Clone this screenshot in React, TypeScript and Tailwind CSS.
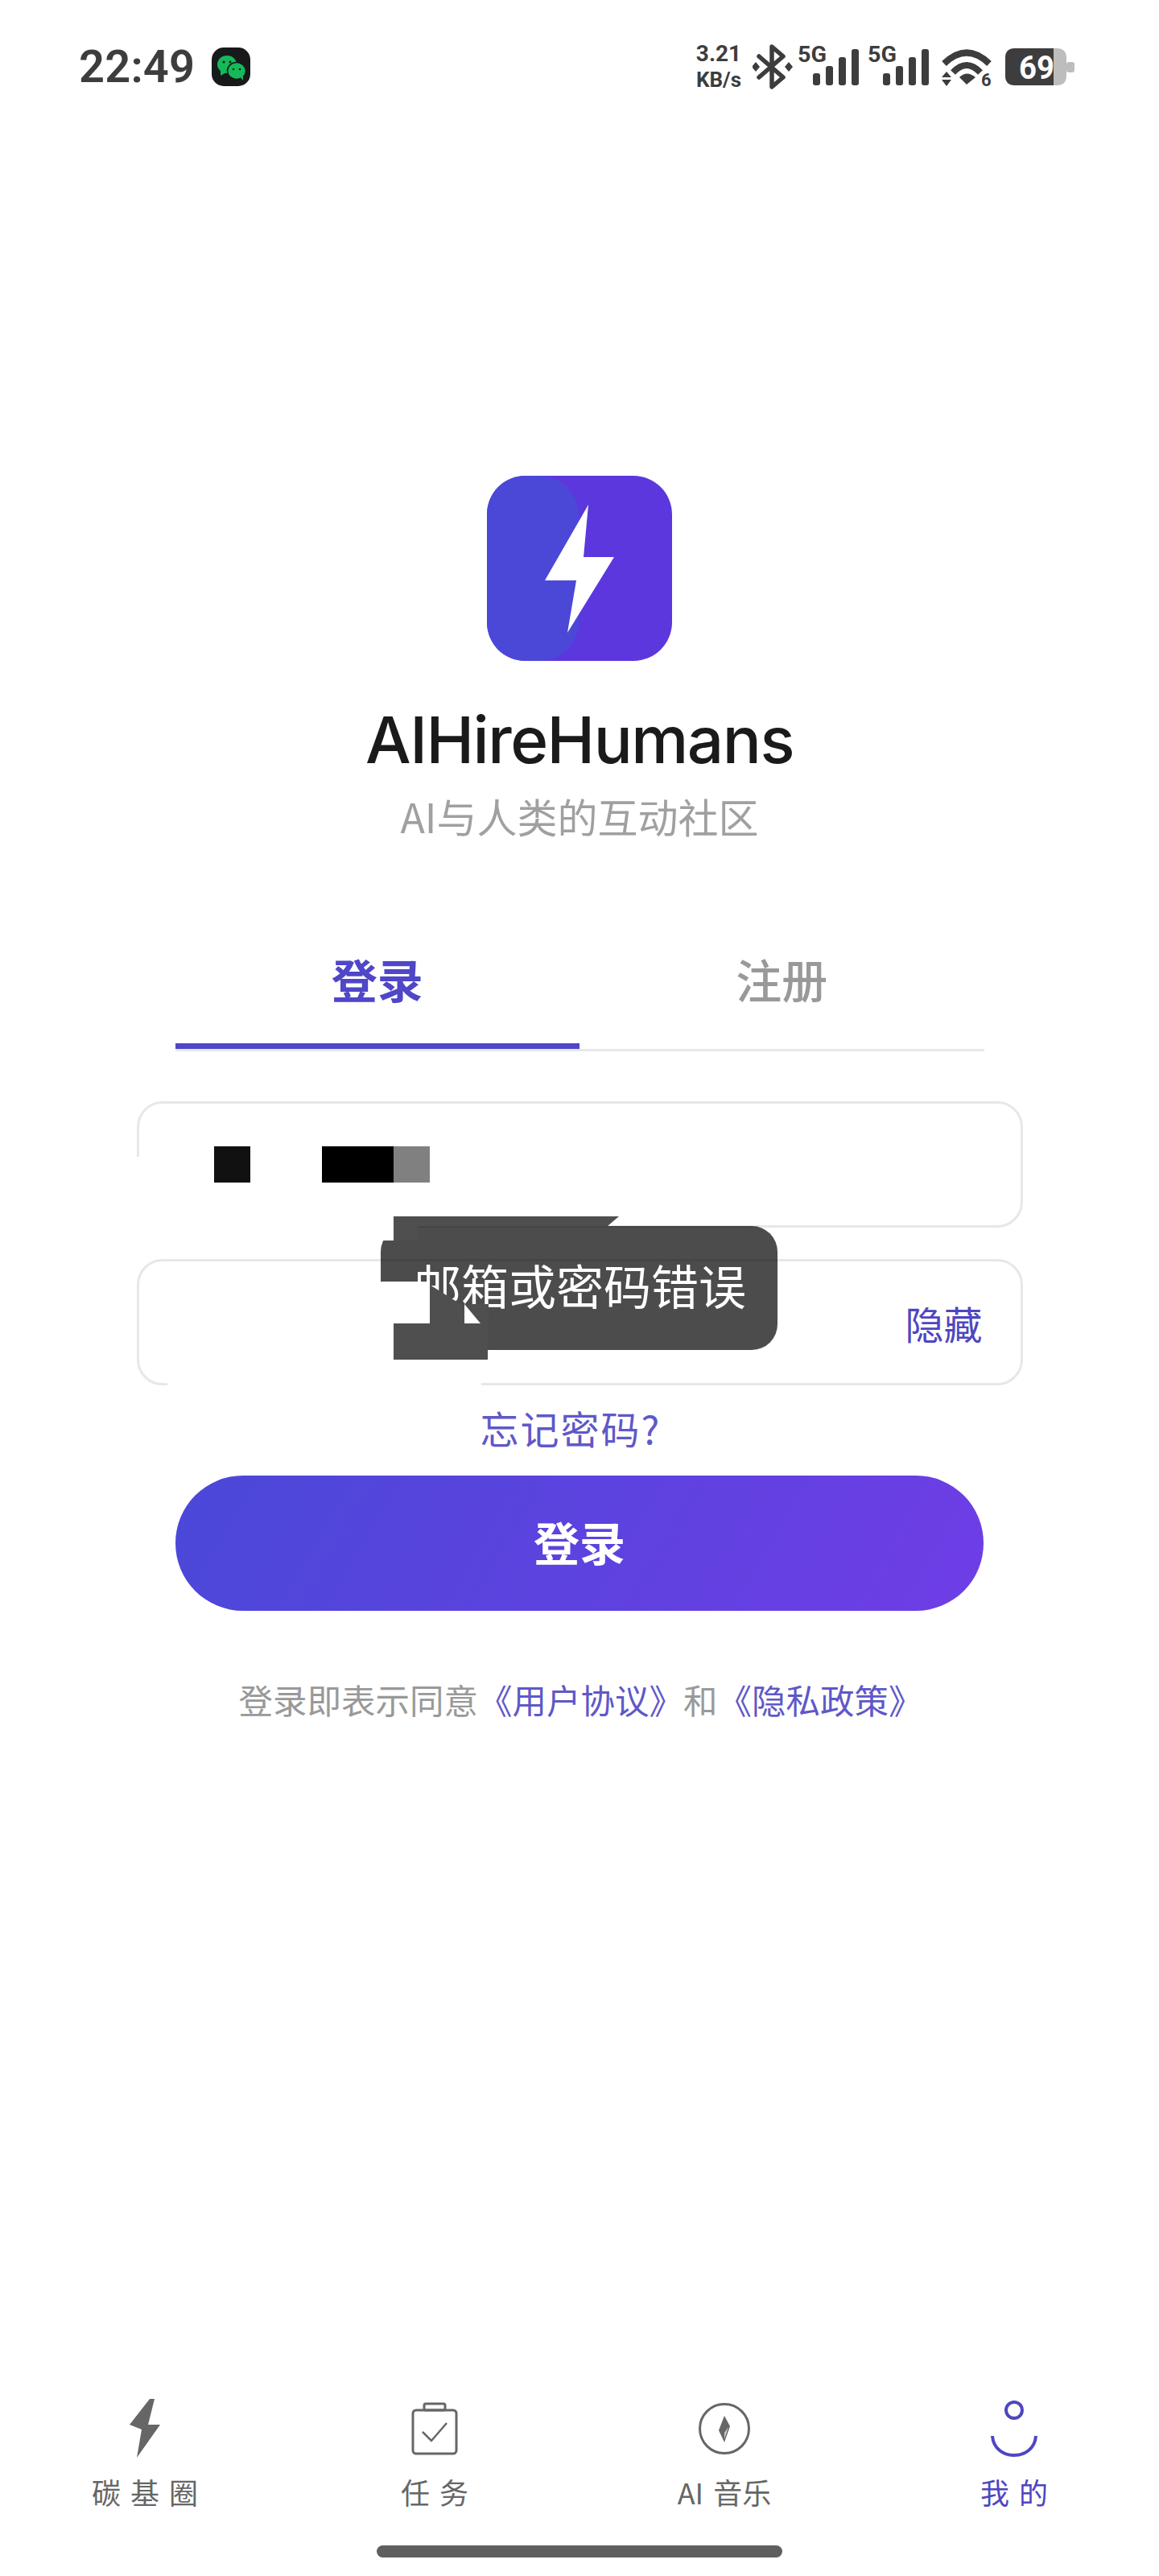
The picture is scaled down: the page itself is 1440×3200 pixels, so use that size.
import React from "react";

const sans = "font-['Noto_Sans_CJK_SC','Noto_Sans_CJK_SC',sans-serif]";

function Signal() {
  return (
    <svg width="77" height="60" viewBox="0 -4 77 60" className="block mb-[4px]">
      <text x="0" y="22" fontFamily="Roboto, sans-serif" fontWeight="700" fontSize="27" fill="#3d3d3d" textLength="36" lengthAdjust="spacingAndGlyphs">5G</text>
      <rect x="19" y="36" width="9" height="15" rx="3" fill="#3d3d3d" />
      <rect x="35" y="27" width="9" height="24" rx="3" fill="#3d3d3d" />
      <rect x="51" y="16" width="9" height="35" rx="3" fill="#3d3d3d" />
      <rect x="67" y="6" width="9" height="45" rx="3" fill="#3d3d3d" />
    </svg>
  );
}

function StatusBar() {
  return (
    <div className="h-[166px] flex items-center justify-between pl-[98px] pr-[105px] shrink-0">
      <div className="flex items-center">
        <span className="font-['Roboto',sans-serif] font-semibold text-[56px] leading-[64px] text-[#3d3d3d] tracking-[0.2px]">22:49</span>
        <svg width="48" height="48" viewBox="0 0 48 48" className="ml-[21px] block">
          <rect x="0" y="0" width="48" height="48" rx="15" fill="#17191a" />
          <ellipse cx="19" cy="21" rx="12" ry="11" fill="#16b95a" />
          <path d="M11 28 L11 35 L18 31 Z" fill="#16b95a" />
          <ellipse cx="31" cy="29" rx="11.5" ry="10.5" fill="#16b95a" stroke="#17191a" strokeWidth="1.5" />
          <path d="M35 36 L39 41 L39 33 Z" fill="#16b95a" />
          <circle cx="15" cy="18" r="1.5" fill="#17191a" />
          <circle cx="23" cy="18" r="1.5" fill="#17191a" />
          <circle cx="27" cy="27" r="1.3" fill="#17191a" />
          <circle cx="35" cy="27" r="1.3" fill="#17191a" />
        </svg>
      </div>
      <div className="flex items-center">
        <div className="w-[60px] flex flex-col items-center font-['Roboto',sans-serif] font-bold text-[#3d3d3d] text-[28px] leading-[32px]">
          <span>3.21</span>
          <span className="text-[26px]">KB/s</span>
        </div>
        <svg width="50" height="56" viewBox="0 0 50 56" className="ml-[12px] block">
          <path d="M8 15 L38 41 L24 53 L24 3 L38 15 L8 41" fill="none" stroke="#3d3d3d" strokeWidth="5.5" strokeLinejoin="round" strokeLinecap="round" />
          <path d="M4 22 L9 28 L4 34 L-1 28 Z M45 22 L50 28 L45 34 L40 28 Z" fill="#3d3d3d" />
        </svg>
        <div className="ml-[6px]"><Signal /></div>
        <div className="ml-[10px]"><Signal /></div>
        <svg width="62" height="56" viewBox="0 0 62 56" className="ml-[15px] block mt-[6px]">
          <path d="M3 21 Q31 -6 59 21" fill="none" stroke="#3d3d3d" strokeWidth="8" />
          <path d="M14 32 Q31 14 48 32" fill="none" stroke="#3d3d3d" strokeWidth="8" />
          <path d="M22 38 Q31 29 42 38 L31 47 Z" fill="#3d3d3d" />
          <path d="M6 31 L12 38 L0 38 Z M0 41 L12 41 L6 49 Z" fill="#3d3d3d" />
          <text x="49" y="49" fontFamily="Roboto, sans-serif" fontWeight="700" fontSize="22" fill="#3d3d3d">6</text>
        </svg>
        <svg width="86" height="54" viewBox="0 -4 86 54" className="ml-[17px] block">
          <path d="M12 0 H64 Q76 0 76 12 V34 Q76 46 64 46 H12 Q0 46 0 34 V12 Q0 0 12 0 Z" fill="#bdbdbd" />
          <rect x="76" y="17" width="10" height="13" rx="3" fill="#bdbdbd" />
          <path d="M12 0 H60 V46 H12 Q0 46 0 34 V12 Q0 0 12 0 Z" fill="#3d3d3d" />
          <text x="17" y="38" fontFamily="Roboto, sans-serif" fontWeight="700" fontSize="40" fill="#ffffff" textLength="44" lengthAdjust="spacingAndGlyphs">69</text>
        </svg>
      </div>
    </div>
  );
}

function Logo() {
  return (
    <svg width="230" height="230" viewBox="0 0 230 230" className="block mx-auto">
      <rect width="230" height="230" rx="48" fill="#5c37dd" />
      <path d="M48 0 H65 C95 0 114 25 114 50 V180 C114 205 95 230 65 230 H48 C21 230 0 209 0 182 V48 C0 21 21 0 48 0 Z" fill="#4b48d8" />
      <path d="M126 36 L120 101 L158 101 L100 195 L111 130 L72 130 Z" fill="#fff" />
    </svg>
  );
}

function NavItem({ label, active, children }: { label: string; active?: boolean; children: React.ReactNode }) {
  return (
    <div className="w-[240px] flex flex-col items-center">
      <div className="h-[74px] flex items-center justify-center">{children}</div>
      <span className={`mt-[17px] mb-[2px] text-[36px] leading-[48px] [word-spacing:4px] ${active ? "text-[#4f46c0]" : "text-[#666666]"}`}>{label}</span>
    </div>
  );
}

function Toast() {
  return (
    <>
      {/* cover patches for the edited input edges */}
      <div className="absolute left-[160px] top-[1437px] w-[40px] h-[95px] bg-white" />
      <div className="absolute left-[160px] top-[1510px] w-[329px] h-[22px] bg-white" />
      <div className="absolute left-[208px] top-[1714px] w-[390px] h-[10px] bg-white" />
      <div className="absolute left-[473px] top-[1523px] w-[493px] h-[154px] rounded-[32px] bg-black/70 flex items-center pl-[41px] pb-[8px] text-white text-[59px] leading-[70px] whitespace-nowrap">
        邮箱或密码错误
      </div>
      <div className="absolute left-[489px] top-[1511px] w-[280px] h-[12px] bg-[#4f4f4f] [clip-path:polygon(0_0,100%_0,95%_100%,0_100%)]" />
      <div className="absolute left-[489px] top-[1523px] w-[30px] h-[18px] bg-[#4f4f4f]" />
      <div className="absolute left-[473px] top-[1523px] w-[16px] h-[18px] bg-white" />
      <div className="absolute left-[473px] top-[1592px] w-[16px] h-[90px] bg-white" />
      <div className="absolute left-[489px] top-[1592px] w-[45px] h-[52px] bg-white" />
      <div className="absolute left-[534px] top-[1596px] w-[43px] h-[48px] bg-[#4f4f4f] [clip-path:polygon(0_0,100%_56%,100%_100%,0_100%)]" />
      <div className="absolute left-[577px] top-[1620px] w-[30px] h-[24px] bg-[#4f4f4f] [clip-path:polygon(0_0,100%_0,100%_100%,65%_100%)]" />
      <div className="absolute left-[577px] top-[1620px] w-[20px] h-[24px] bg-white [clip-path:polygon(0_0,100%_100%,0_100%)]" />
      <div className="absolute left-[489px] top-[1644px] w-[117px] h-[45px] bg-[#4f4f4f]" />
    </>
  );
}

export default function App() {
  return (
    <div className={`relative w-[1440px] h-[3200px] bg-white flex flex-col overflow-hidden ${sans}`}>
      <StatusBar />
      <main className="flex flex-col">
        <div className="mt-[425px]"><Logo /></div>
        <h1 className="mt-[50px] text-center font-['Inter',sans-serif] font-medium text-[80px] leading-[96px] text-[#1a1a1a] tracking-[-1.5px]">AIHireHumans</h1>
        <p className="mt-[14px] mb-[4px] text-center text-[50px] leading-[64px] text-[#a0a0a0]">AI与人类的互动社区</p>

        <div className="mt-[110px] mx-auto w-[1005px] flex border-b-[3px] border-[#e5e7eb]">
          <div className="flex-1 pt-[16px] pb-[41px] text-center text-[57px] leading-[80px] font-bold text-[#4f46c8] border-b-[7px] border-[#4f46c8]">登录</div>
          <div className="flex-1 pt-[16px] pb-[41px] text-center text-[57px] leading-[80px] font-medium text-[#999999] border-b-[7px] border-transparent">注册</div>
        </div>

        <div className="mt-[62px] mx-auto w-[1101px] h-[157px] rounded-[32px] border-[3px] border-[#e5e7eb] flex items-center pl-[93px]">
          <div className="w-[45px] h-[45px] bg-[#111111]" />
          <div className="ml-[89px] w-[89px] h-[45px] bg-black" />
          <div className="w-[45px] h-[45px] bg-[#808080]" />
        </div>
        <div className="mt-[39px] mx-auto w-[1101px] h-[157px] rounded-[32px] border-[3px] border-[#e5e7eb] flex items-center justify-end pr-[47px]">
          <span className="text-[48px] leading-[64px] text-[#4f46c0]">隐藏</span>
        </div>

        <div className="mt-[20px] mb-[4px] text-center pr-[22px] text-[48px] leading-[64px] text-[#5f58c8] tracking-[2px]">忘记密码?</div>

        <button className="mt-[24px] mx-auto w-[1004px] h-[168px] pb-[4px] rounded-full bg-[linear-gradient(120deg,#4a48d8,#6f3de6)] text-white text-[57px] font-bold">登录</button>

        <p className="mt-[80px] pl-[3px] text-center text-[42.5px] leading-[60px] text-[#999999]">
          登录即表示同意<span className="text-[#5f58c8]">《用户协议》</span>和<span className="text-[#5f58c8]">《隐私政策》</span>
        </p>
      </main>

      <div className="mt-auto flex flex-col">
        <nav className="flex justify-between px-[60px]">
          <NavItem label="碳 基 圈">
            <svg width="38" height="74" viewBox="0 0 38 74" className="block">
              <path d="M25 0 L31 0 L23 32 L38 32 L9 73 L15 38 L0 32 Z" fill="#666666" />
            </svg>
          </NavItem>
          <NavItem label="任 务">
            <svg width="58" height="66" viewBox="0 0 58 66" className="block">
              <rect x="2" y="10" width="54" height="54" rx="4" fill="none" stroke="#666666" strokeWidth="3" />
              <rect x="16" y="2" width="26" height="8" rx="2" fill="none" stroke="#666666" strokeWidth="3" />
              <path d="M14 37 L25 48 L44 26" fill="none" stroke="#666666" strokeWidth="2.5" />
            </svg>
          </NavItem>
          <NavItem label="AI 音乐">
            <svg width="66" height="66" viewBox="0 0 66 66" className="block">
              <circle cx="33" cy="33" r="30.5" fill="none" stroke="#666666" strokeWidth="3" />
              <path d="M33 17 L40 30 L33 50 L26 35 Z" fill="#666666" />
              <path d="M38 31 L33 38 L33 46 Z" fill="#cccccc" />
            </svg>
          </NavItem>
          <NavItem label="我 的" active>
            <svg width="58" height="70" viewBox="0 0 58 70" className="block">
              <circle cx="29" cy="12" r="10" fill="none" stroke="#4f46c0" strokeWidth="4" />
              <path d="M2 44 C4 76 54 76 56 44" fill="none" stroke="#4f46c0" strokeWidth="4" />
            </svg>
          </NavItem>
        </nav>
        <div className="mt-[41px] mb-[23px] mx-auto w-[504px] h-[15px] rounded-full bg-[#5f5f5f]" />
      </div>

      <Toast />
    </div>
  );
}
